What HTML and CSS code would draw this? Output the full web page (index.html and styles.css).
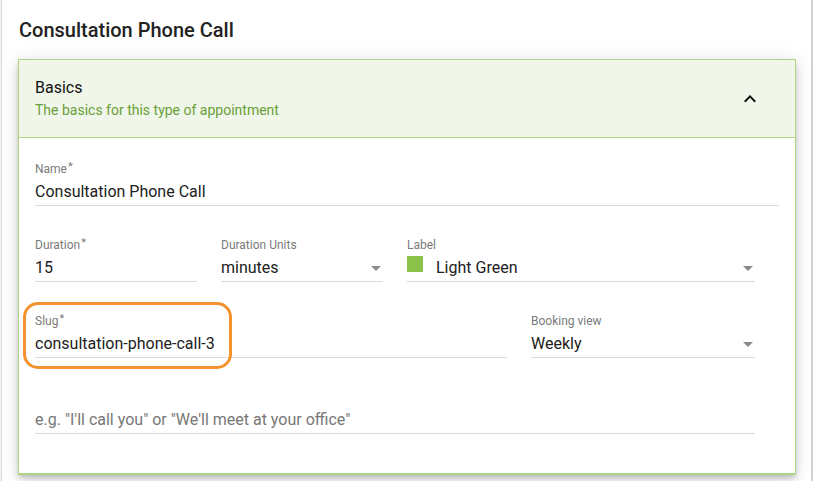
FILE: index.html
```html
<!DOCTYPE html>
<html>
<head>
<meta charset="utf-8">
<link rel="stylesheet" href="styles.css">
</head>
<body>
<div class="page">
  <h1 class="title">Consultation Phone Call</h1>
  <section class="card">
    <header class="card-head">
      <div class="head-text">
        <div class="head-title">Basics</div>
        <div class="head-sub">The basics for this type of appointment</div>
      </div>
      <svg class="chevron" width="24" height="24" viewBox="0 0 24 24"><path d="M12 8l-6 6 1.41 1.41L12 10.83l4.59 4.58L18 14z" fill="#111"/></svg>
    </header>
    <div class="card-body">
      <div class="field full">
        <div class="label">Name<span class="req">*</span></div>
        <div class="value">Consultation Phone Call</div>
      </div>
      <div class="grid">
        <div class="field c3">
          <div class="label">Duration<span class="req">*</span></div>
          <div class="value">15</div>
        </div>
        <div class="field c3">
          <div class="label">Duration Units</div>
          <div class="value select">minutes<span class="arrow"></span></div>
        </div>
        <div class="field c6">
          <div class="label">Label</div>
          <div class="value select"><span class="swatch"></span>Light Green<span class="arrow"></span></div>
        </div>
      </div>
      <div class="grid">
        <div class="field c8 slug">
          <div class="label">Slug<span class="req">*</span></div>
          <div class="value">consultation-phone-call-3</div>
          <div class="highlight"></div>
        </div>
        <div class="field c4">
          <div class="label">Booking view</div>
          <div class="value select">Weekly<span class="arrow"></span></div>
        </div>
      </div>
      <div class="grid">
        <div class="field c12">
          <div class="label">&nbsp;</div>
          <div class="value placeholder">e.g. "I'll call you" or "We'll meet at your office"</div>
        </div>
      </div>
    </div>
  </section>
</div>
</body>
</html>
```

FILE: styles.css
```css
html {
  background: #f3f3f3;
}
body {
  margin: 0;
  font-family: Roboto, "Liberation Sans", Arial, sans-serif;
  color: #212121;
}
.page {
  margin-left: 1px;
  width: 812px;
  height: 481px;
  background: #fff;
  border-left: 1px solid #d6dbe0;
  border-right: 2px solid #d2d2d2;
  padding: 18px 0 0 16px;
  box-sizing: border-box;
  overflow: hidden;
}
.title {
  margin: 0 0 17px 1px;
  font-size: 20px;
  line-height: 24px;
  font-weight: 500;
  color: #222;
}
.card {
  width: 778px;
  box-sizing: border-box;
  border: 1px solid #aed581;
  border-bottom-width: 2px;
  background: #fff;
  box-shadow: 0 3px 5px -1px rgba(0,0,0,.16), 0 6px 10px 0 rgba(0,0,0,.10), 0 1px 18px 0 rgba(0,0,0,.10);
}
.card-head {
  display: flex;
  align-items: center;
  background: #f0f6e9;
  border-bottom: 1px solid #aed581;
  padding: 18px 33px 17px 16px;
  height: 78px;
  box-sizing: border-box;
}
.head-text {
  flex: 1;
}
.head-title {
  font-size: 16px;
  line-height: 20px;
  color: #111;
}
.head-sub {
  margin-top: 2px;
  font-size: 14px;
  line-height: 20px;
  color: #689f38;
}
.chevron {
  display: block;
}
.card-body {
  padding: 24px 16px 39px 16px;
  display: flex;
  flex-direction: column;
  gap: 32px;
}
.grid {
  display: grid;
  grid-template-columns: repeat(12, 1fr);
  width: 744px;
}
.c3 { grid-column: span 3; }
.c4 { grid-column: span 4; }
.c6 { grid-column: span 6; }
.c8 { grid-column: span 8; }
.c12 { grid-column: span 12; }
.grid .field {
  margin-right: 24px;
}
.field {
  position: relative;
  border-bottom: 1px solid #dadada;
  padding-bottom: 3px;
}
.field.full {
  width: 744px;
  box-sizing: border-box;
}
.label {
  font-size: 12px;
  line-height: 14px;
  height: 14px;
  color: #7a7a7a;
  margin-bottom: 6px;
  white-space: nowrap;
}
.req {
  font-size: 11px;
  line-height: 10px;
  position: relative;
  top: -3px;
  margin-left: 1px;
}
.value {
  font-size: 16px;
  line-height: 20px;
  height: 20px;
  color: #212121;
  white-space: nowrap;
}
.placeholder {
  color: #777;
}
.select {
  display: flex;
  align-items: flex-start;
}
.arrow {
  margin-left: auto;
  margin-right: 2px;
  margin-top: 8px;
  width: 0;
  height: 0;
  border-left: 5px solid transparent;
  border-right: 5px solid transparent;
  border-top: 5px solid #8a8a8a;
}
.swatch {
  width: 16px;
  height: 16px;
  background: #8bc34a;
  margin-top: -2px;
  margin-right: 13px;
  flex: none;
}
.highlight {
  position: absolute;
  left: -12px;
  top: -12px;
  width: 209px;
  height: 67px;
  box-sizing: border-box;
  border: 3.5px solid #f4922d;
  border-radius: 15px;
  pointer-events: none;
}
```
